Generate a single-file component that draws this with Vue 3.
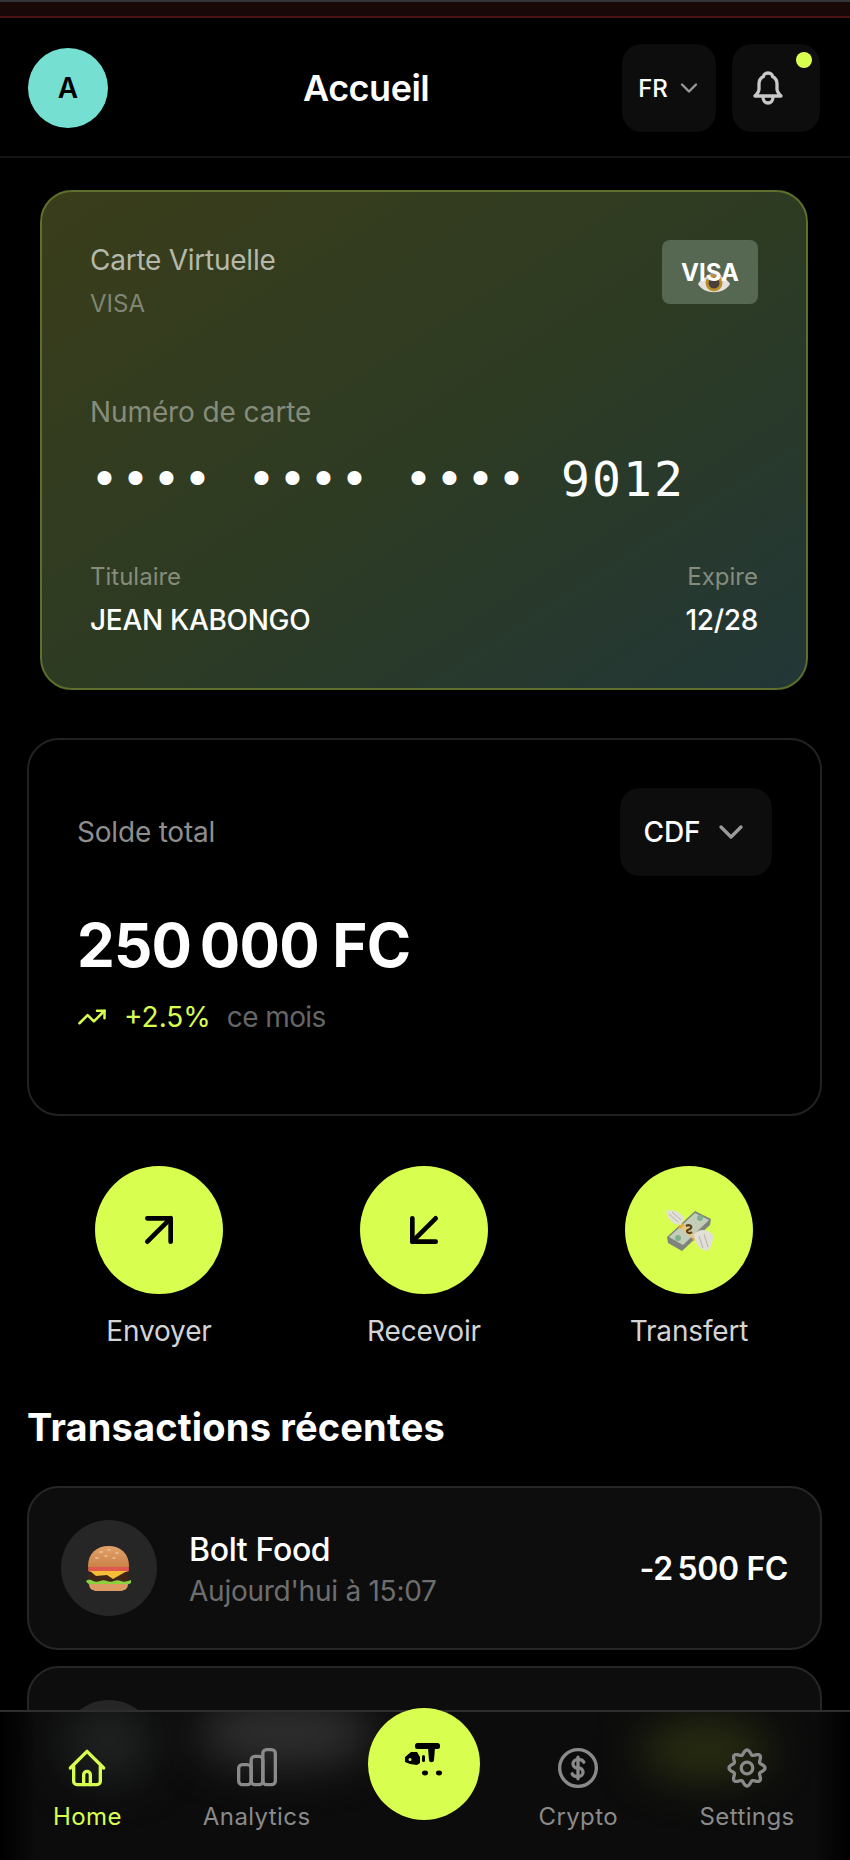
<script setup>
const actions = [
  { label: 'Envoyer', icon: 'up' },
  { label: 'Recevoir', icon: 'down' },
  { label: 'Transfert', icon: 'money' },
]

const gearPoints = []
for (let i = 0; i < 160; i++) {
  const t = (i / 160) * Math.PI * 2
  const r = 15.85 + 2.15 * Math.cos(8 * t)
  gearPoints.push(`${(20 + r * Math.cos(t)).toFixed(2)},${(20 + r * Math.sin(t)).toFixed(2)}`)
}
const gearOutline = gearPoints.join(' ')
</script>

<template>
  <div class="page">
    <div class="topstrip"></div>
    <header class="header">
      <div class="avatar">A</div>
      <h1 class="title">Accueil</h1>
      <div class="header-right">
        <button class="lang">
          <span>FR</span>
          <svg width="28" height="28" viewBox="0 0 24 24" fill="none" stroke="#9a9a9a" stroke-width="2" stroke-linecap="round" stroke-linejoin="round"><path d="m6 9 6 6 6-6"/></svg>
        </button>
        <button class="bell">
          <svg width="30" height="34" viewBox="0 0 30 34" fill="none" stroke="#c8c8c8" stroke-width="3.3" stroke-linecap="round" stroke-linejoin="round"><path d="M15 2C11.5 2 10.5 4.5 10.5 5.5 7.5 7 6 10 6 13V18C6 20.5 4 23 2 25H28C26 23 24 20.5 24 18V13C24 10 22.5 7 19.5 5.5 19.5 4.5 18.5 2 15 2Z"/><path d="M10 26c0 8 10 8 10 0"/></svg>
          <span class="dot"></span>
        </button>
      </div>
    </header>

    <main class="main">
      <section class="vcard">
        <div class="vcard-top">
          <div>
            <div class="vcard-name">Carte Virtuelle</div>
            <div class="vcard-type">VISA</div>
          </div>
          <div class="visa">
            <svg class="eye" viewBox="0 0 32 32">
              <path d="M0 20C6 9 26 9 32 20C26 31 6 31 0 20Z" fill="#e6e1dc"/>
              <path d="M8 12C12 8 20 8 24 12L22 16H10Z" fill="#a9a0b0"/>
              <circle cx="16" cy="19" r="8.5" fill="#b8902c"/>
              <circle cx="16" cy="19" r="5.5" fill="#4a3f3c"/>
            </svg>
            <span>VISA</span>
          </div>
        </div>
        <div class="vcard-label">Numéro de carte</div>
        <div class="vcard-number">
          <span class="dots">••••</span>
          <span class="dots">••••</span>
          <span class="dots">••••</span>
          <span>9012</span>
        </div>
        <div class="vcard-bottom">
          <div>
            <div class="vcard-small">Titulaire</div>
            <div class="vcard-value">JEAN KABONGO</div>
          </div>
          <div class="align-right">
            <div class="vcard-small">Expire</div>
            <div class="vcard-value">12/28</div>
          </div>
        </div>
      </section>

      <section class="balance">
        <div class="balance-top">
          <span class="balance-label">Solde total</span>
          <button class="currency">
            <span>CDF</span>
            <svg width="40" height="40" viewBox="0 0 24 24" fill="none" stroke="#9a9a9a" stroke-width="2" stroke-linecap="round" stroke-linejoin="round"><path d="m6 9 6 6 6-6"/></svg>
          </button>
        </div>
        <div class="amount">250&#8239;000 FC</div>
        <div class="trend">
          <svg width="30" height="30" viewBox="0 0 24 24" fill="none" stroke="#d8ff4f" stroke-width="2" stroke-linecap="round" stroke-linejoin="round"><path d="M16 7h6v6"/><path d="m22 7-8.5 8.5-5-5L2 17"/></svg>
          <span class="trend-val">+2.5%</span>
          <span class="trend-txt">ce mois</span>
        </div>
      </section>

      <section class="actions">
        <div v-for="a in actions" :key="a.label" class="action">
          <div class="action-circle">
            <svg v-if="a.icon === 'up'" width="56" height="56" viewBox="0 0 24 24" fill="none" stroke="#000" stroke-width="2" stroke-linecap="round" stroke-linejoin="round"><path d="M7 7h10v10"/><path d="M7 17 17 7"/></svg>
            <svg v-else-if="a.icon === 'down'" width="56" height="56" viewBox="0 0 24 24" fill="none" stroke="#000" stroke-width="2" stroke-linecap="round" stroke-linejoin="round"><path d="M17 7 7 17"/><path d="M17 17H7V7"/></svg>
            <svg v-else width="47" height="41" viewBox="0 0 47 41">
              <path d="M1 27 29 1 45 9 44 15 16 41 2 33Z" fill="#7f857a"/>
              <path d="M3 27 29 3 43 10 17 35Z" fill="#c3cdb8"/>
              <circle cx="34" cy="8" r="3" fill="#7fb08e"/>
              <circle cx="12" cy="28" r="3" fill="#7fb08e"/>
              <path d="M13 17 17 14 31 26 27 29Z" fill="#e2c885"/>
              <path d="M12 17 16 13 18 15 14 19Z M26 30 30 26 32 27 28 31Z" fill="#e3a62f"/>
              <path d="M20 16c3-2 6 0 5 2-1 2-4 1-4 3s3 3 5 1" fill="none" stroke="#5e3f16" stroke-width="2.2"/>
              <path d="M0 1C6-1 14 1 18 8L15 15C7 15 1 9 0 1Z" fill="#e2dfd6"/>
              <path d="M3 4 12 12M6 2 15 10" stroke="#b4b1a7" stroke-width="1"/>
              <path d="M28 24C34 18 42 19 47 25 47 32 45 38 41 41 33 40 28 32 28 24Z" fill="#e2dfd6"/>
              <path d="M33 26 37 38M38 24 42 37" stroke="#b4b1a7" stroke-width="1"/>
            </svg>
          </div>
          <span class="action-label">{{ a.label }}</span>
        </div>
      </section>

      <h2 class="section-title">Transactions récentes</h2>

      <div class="tx">
        <div class="tx-icon">
          <svg class="burger" width="45" height="45" viewBox="0 0 45 45">
            <defs>
              <linearGradient id="bun" x1="0" y1="0" x2="0" y2="1">
                <stop offset="0" stop-color="#e2a26a"/>
                <stop offset="1" stop-color="#c97f45"/>
              </linearGradient>
            </defs>
            <path d="M2 20C2 7 11 0 22.5 0S43 7 43 20c0 2-1 3-3 3H5c-2 0-3-1-3-3Z" fill="url(#bun)"/>
            <path d="M14 6h2M22 4h2M30 7h2M19 10h2M27 12h2M10 12h2" stroke="#f3dfc6" stroke-width="1.2" stroke-linecap="round"/>
            <rect x="2" y="21" width="41" height="5" rx="2.5" fill="#df5a4d"/>
            <rect x="2" y="26" width="41" height="10" rx="5" fill="#3f2418"/>
            <path d="M4 25h37L27 33 21 29 10 30Z" fill="#f5bd38"/>
            <path d="M0 35c3-2 5-1 7 0s5 1 7 0 5-1 7 0 5 1 7 0 5-1 7 0 5 1 10-1v3c-3 2-6 2-8 1-3 1-6 2-8 0-3 2-7 2-9 0-5 2-17 3-20-3Z" fill="#8ed13f"/>
            <path d="M3 38h39c0 5-4 7-8 7H11c-4 0-8-2-8-7Z" fill="#dc9b63"/>
          </svg>
        </div>
        <div class="tx-text">
          <div class="tx-name">Bolt Food</div>
          <div class="tx-time">Aujourd'hui à 15:07</div>
        </div>
        <div class="tx-amount">-2&#8239;500 FC</div>
      </div>

      <div class="tx tx-next">
        <div class="tx-icon"></div>
      </div>
    </main>

    <nav class="nav">
      <div class="glow">
        <span class="blur b1"></span>
        <span class="blur b2"></span>
        <span class="blur b3"></span>
      </div>
      <div class="nav-item active">
        <svg width="40" height="40" viewBox="0 0 24 24" fill="none" stroke="currentColor" stroke-width="2" stroke-linecap="round" stroke-linejoin="round"><path d="M2 12 12 2l10 10"/><path d="M4 11v9a2 2 0 0 0 2 2h12a2 2 0 0 0 2-2v-9"/><path d="M10 22v-6a2 2 0 0 1 4 0v6"/></svg>
        <span>Home</span>
      </div>
      <div class="nav-item n2">
        <svg width="40" height="40" viewBox="0 0 24 24" fill="none" stroke="currentColor" stroke-width="2" stroke-linecap="round" stroke-linejoin="round"><rect x="1" y="10" width="7.5" height="12" rx="2.2"/><rect x="8.5" y="5" width="7" height="17" rx="2.2"/><rect x="15.5" y="1" width="7.5" height="21" rx="2.2"/></svg>
        <span>Analytics</span>
      </div>
      <div class="nav-center">
        <svg width="44" height="44" viewBox="0 0 44 44">
          <rect x="13" y="1" width="25" height="6" rx="2.5" fill="#000"/>
          <path d="M26 6h7l-1 12c0 3-5 3-5 0Z" fill="#000"/>
          <rect x="20" y="13" width="3" height="7" rx="1.5" fill="#000"/>
          <path fill-rule="evenodd" d="M9 10h6l3 5v6l-3 2-7-1-5-2v-5Zm-1 6a1.5 1.5 0 1 0 0 3 1.5 1.5 0 0 0 0-3Z" fill="#000"/>
          <ellipse cx="23" cy="31" rx="3" ry="2.4" fill="#000"/>
          <ellipse cx="37" cy="31" rx="3" ry="2.4" fill="#000"/>
        </svg>
      </div>
      <div class="nav-item n4">
        <svg width="40" height="40" viewBox="0 0 24 24" fill="none" stroke="currentColor" stroke-width="2" stroke-linecap="round" stroke-linejoin="round"><circle cx="12" cy="12" r="11"/><path d="M15.5 8.5a3 3 0 0 0-3-1.5h-1a2.5 2.5 0 0 0 0 5h1a2.5 2.5 0 0 1 0 5h-1a3 3 0 0 1-3-1.5"/><path d="M12 5.5v13"/></svg>
        <span>Crypto</span>
      </div>
      <div class="nav-item n5">
        <svg width="40" height="40" viewBox="0 0 40 40" fill="none" stroke="currentColor" stroke-width="3.3" stroke-linejoin="round">
          <polygon :points="gearOutline"/>
          <circle cx="20" cy="20" r="5.8"/>
        </svg>
        <span>Settings</span>
      </div>
    </nav>
  </div>
</template>

<style scoped>
.page {
  position: relative;
  width: 850px;
  height: 1860px;
  overflow: hidden;
  background: #000;
  color: #fff;
  font-family: Inter, "Liberation Sans", sans-serif;
}
.topstrip {
  height: 14px;
  background: #190808;
  border-top: 2px solid #33333a;
  border-bottom: 2px solid #4a1414;
  margin-bottom: 2px;
}
.header {
  position: relative;
  display: flex;
  align-items: center;
  justify-content: space-between;
  height: 138px;
  padding: 0 30px 0 28px;
  border-bottom: 2px solid #141414;
  box-sizing: border-box;
}
.avatar {
  width: 80px;
  height: 80px;
  border-radius: 50%;
  background: #75e0d2;
  color: #000;
  display: flex;
  align-items: center;
  justify-content: center;
  font-size: 28px;
  font-weight: 600;
}
.title {
  position: absolute;
  left: 303px;
  top: 46px;
  margin: 0;
  font-size: 36px;
  font-weight: 600;
  line-height: 44px;
  letter-spacing: -0.5px;
}
.header-right {
  display: flex;
  gap: 16px;
}
button {
  font-family: inherit;
  border: 0;
  color: #fff;
}
.lang {
  width: 94px;
  height: 88px;
  border-radius: 20px;
  background: #0d0d0d;
  display: flex;
  align-items: center;
  justify-content: center;
  gap: 7px;
  font-size: 24px;
  font-weight: 500;
  padding: 0 0 0 3px;
}
.bell {
  position: relative;
  width: 88px;
  height: 88px;
  border-radius: 20px;
  background: #0d0d0d;
  display: flex;
  align-items: center;
  justify-content: center;
  padding: 0 16px 0 0;
}
.dot {
  position: absolute;
  top: 8px;
  right: 8px;
  width: 16px;
  height: 16px;
  border-radius: 50%;
  background: #d8ff4f;
}
.main {
  padding: 32px 28px 0 27px;
}
.vcard {
  margin: 0 14px 0 13px;
  height: 500px;
  box-sizing: border-box;
  padding: 48px 48px 0 48px;
  border: 2px solid #5d6f2a;
  border-radius: 32px;
  background: linear-gradient(to bottom right, #3a3d1a 0%, #2d3b23 52%, #223737 100%);
}
.vcard-top {
  display: flex;
  justify-content: space-between;
  align-items: flex-start;
}
.vcard-name {
  font-size: 28px;
  line-height: 40px;
  letter-spacing: -0.25px;
  color: #b4b9ab;
}
.vcard-type {
  margin-top: 8px;
  font-size: 24px;
  line-height: 32px;
  color: #7f8774;
}
.visa {
  position: relative;
  width: 96px;
  height: 64px;
  border-radius: 8px;
  background: #566852;
  display: flex;
  align-items: center;
  justify-content: center;
  font-size: 24px;
  font-weight: 700;
}
.visa span {
  position: relative;
}
.eye {
  position: absolute;
  left: 36px;
  top: 24px;
  width: 32px;
  height: 32px;
}
.vcard-label {
  margin-top: 72px;
  font-size: 28px;
  line-height: 40px;
  letter-spacing: -0.1px;
  color: #858c7c;
}
.vcard-number {
  display: flex;
  align-items: center;
  gap: 33px;
  margin-top: 15px;
  height: 64px;
  font-family: "DejaVu Sans Mono", monospace;
  font-size: 48px;
  letter-spacing: 2.1px;
}
.vcard-bottom {
  display: flex;
  justify-content: space-between;
  margin-top: 50px;
}
.align-right {
  text-align: right;
}
.vcard-small {
  font-size: 24px;
  line-height: 32px;
  color: #858c7c;
}
.vcard-value {
  margin-top: 7px;
  font-size: 28px;
  font-weight: 500;
  line-height: 40px;
  letter-spacing: -0.3px;
}
.balance {
  margin-top: 48px;
  height: 378px;
  box-sizing: border-box;
  padding: 48px;
  border: 2px solid #222;
  border-radius: 32px;
}
.balance-top {
  display: flex;
  justify-content: space-between;
  align-items: center;
}
.balance-label {
  font-size: 28px;
  letter-spacing: -0.2px;
  color: #8e8e8e;
}
.currency {
  width: 152px;
  height: 88px;
  border-radius: 20px;
  background: #0d0d0d;
  display: flex;
  align-items: center;
  justify-content: center;
  gap: 10px;
  font-size: 28px;
  font-weight: 500;
  padding: 0 0 0 2px;
}
.amount {
  margin-top: 33px;
  font-size: 60px;
  line-height: 72px;
  font-weight: 700;
  letter-spacing: -0.8px;
}
.trend {
  display: flex;
  align-items: center;
  margin-top: 20px;
  height: 32px;
  font-size: 28px;
  gap: 16px;
}
.trend svg {
  margin-right: 1px;
}
.trend-val {
  color: #d8ff4f;
}
.trend-txt {
  color: #666;
  letter-spacing: -0.6px;
}
.actions {
  display: flex;
  justify-content: space-between;
  margin-top: 50px;
  padding: 0 69px 0 68px;
}
.action {
  width: 128px;
  display: flex;
  flex-direction: column;
  align-items: center;
  gap: 17px;
}
.action-circle {
  width: 128px;
  height: 128px;
  border-radius: 50%;
  background: #d8ff4f;
  display: flex;
  align-items: center;
  justify-content: center;
}
.action-label {
  font-size: 28px;
  line-height: 40px;
  letter-spacing: -0.15px;
  color: #d4d4d4;
  white-space: nowrap;
}
.section-title {
  margin: 54px 0 0;
  font-size: 38px;
  line-height: 44px;
  font-weight: 700;
  letter-spacing: 0.17px;
}
.tx {
  display: flex;
  align-items: center;
  margin-top: 37px;
  height: 164px;
  box-sizing: border-box;
  padding: 0 32px;
  background: #0d0d0d;
  border: 2px solid #262626;
  border-radius: 32px;
}
.tx-next {
  margin-top: 16px;
  align-items: flex-start;
  padding-top: 32px;
}
.tx-icon {
  flex: none;
  width: 96px;
  height: 96px;
  border-radius: 50%;
  background: #262626;
  display: flex;
  align-items: center;
  justify-content: center;
}
.burger {
  margin-left: -1px;
}
.tx-text {
  flex: 1;
  margin: 2.5px 0 0 32px;
}
.tx-name {
  font-size: 32px;
  line-height: 44px;
  font-weight: 500;
  letter-spacing: -0.35px;
}
.tx-time {
  margin-top: -1.5px;
  font-size: 28px;
  line-height: 40px;
  letter-spacing: -0.25px;
  color: #6e6e6e;
}
.tx-amount {
  font-size: 32px;
  font-weight: 600;
  letter-spacing: -0.4px;
}
.nav {
  position: absolute;
  left: 0;
  right: 0;
  bottom: 0;
  height: 150px;
  box-sizing: border-box;
  display: flex;
  align-items: flex-start;
  padding: 0 0 0 53px;
  background: linear-gradient(to right, #000 0, #0c0c0c 36px, #0c0c0c 815px, #000 100%);
  border-top: 2px solid #2e2e2e;
}
.glow {
  position: absolute;
  inset: 0;
  overflow: hidden;
}
.blur {
  position: absolute;
  filter: blur(22px);
  border-radius: 50%;
}
.b1 { left: 62px; width: 92px; height: 80px; top: -10px; background: #1f2221; }
.b2 { left: 195px; width: 180px; height: 70px; top: -14px; background: #2f2f2f; }
.b3 { left: 640px; width: 130px; height: 60px; top: 8px; background: #2a2f12; }
.nav-item {
  position: relative;
  display: flex;
  flex-direction: column;
  align-items: center;
  padding-top: 36px;
  gap: 13px;
  font-size: 24px;
  line-height: 32px;
  letter-spacing: 0.4px;
  color: #8a8a8a;
}
.nav-item.active {
  color: #d8ff4f;
}
.n2 { margin-left: 81px; }
.n4 { margin-left: 58px; }
.n5 { margin-left: 81.5px; }
.nav-center {
  position: relative;
  margin: -4px 0 0 58px;
  flex: none;
  width: 112px;
  height: 112px;
  border-radius: 50%;
  background: #d8ff4f;
  display: flex;
  align-items: center;
  justify-content: center;
}
</style>
